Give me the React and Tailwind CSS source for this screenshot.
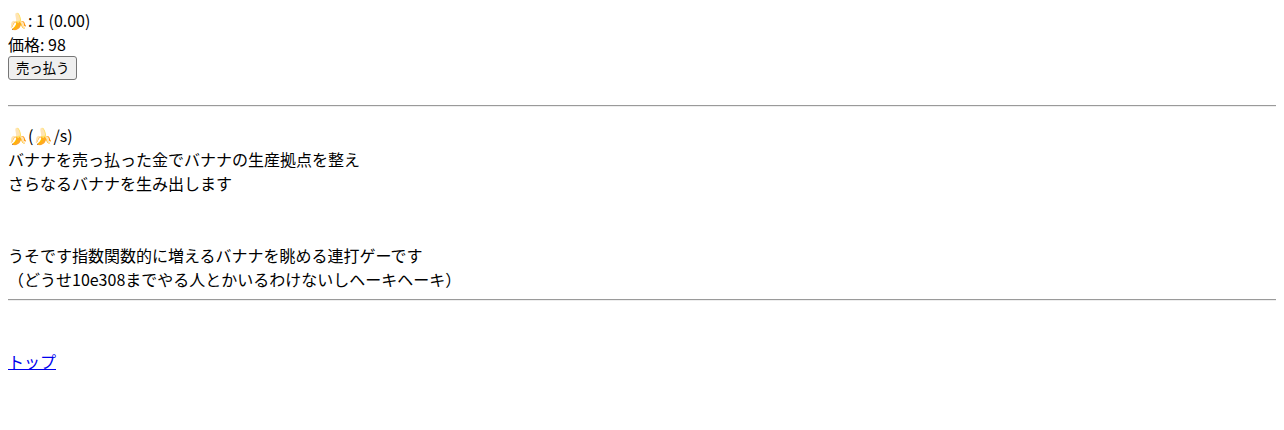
import React from 'react';

export default function App() {
    return (
        <div className="m-2 text-base leading-6 text-black font-['Noto_Sans_CJK_JP','Noto_Sans',sans-serif]">
            <div>🍌: 1 (0.00)</div>
            <div>価格: 98</div>
            <div className="h-6 flex items-center">
                <button className="h-[24px] px-[7px] text-[13.33px] leading-none bg-[#efefef] border border-[#767676] rounded-[3px]">
                    売っ払う
                </button>
            </div>
            <hr className="mt-[25px] mb-[16px] border-t border-t-[#9a9a9a] border-b border-b-[#eeeeee]" />
            <div className="mt-[1px]">🍌(🍌/s)</div>
            <div>バナナを売っ払った金でバナナの生産拠点を整え</div>
            <div>さらなるバナナを生み出します</div>
            <div className="h-12" />
            <div>うそです指数関数的に増えるバナナを眺める連打ゲーです</div>
            <div>（どうせ10e308までやる人とかいるわけないしヘーキヘーキ）</div>
            <hr className="mt-[8px] border-t border-t-[#9a9a9a] border-b border-b-[#eeeeee]" />
            <div className="h-12" />
            <a href="#" className="text-[#0000ee] underline">トップ</a>
        </div>
    );
}
